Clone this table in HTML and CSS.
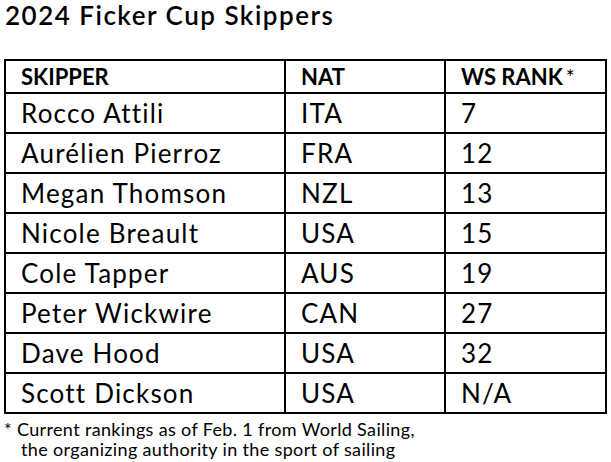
FILE: index.html
```html
<!DOCTYPE html>
<html>
<head>
<meta charset="utf-8">
<link rel="stylesheet" href="styles.css">
</head>
<body>
<div class="page">
  <h1 class="title">2024 Ficker Cup Skippers</h1>
  <table class="tbl">
    <thead>
      <tr><th class="c1">SKIPPER</th><th class="c2">NAT</th><th class="c3">WS RANK<span class="star">*</span></th></tr>
    </thead>
    <tbody>
      <tr><td>Rocco Attili</td><td>ITA</td><td>7</td></tr>
      <tr><td>Aurélien Pierroz</td><td>FRA</td><td>12</td></tr>
      <tr><td>Megan Thomson</td><td>NZL</td><td>13</td></tr>
      <tr><td>Nicole Breault</td><td>USA</td><td>15</td></tr>
      <tr><td>Cole Tapper</td><td>AUS</td><td>19</td></tr>
      <tr><td>Peter Wickwire</td><td>CAN</td><td>27</td></tr>
      <tr><td>Dave Hood</td><td>USA</td><td>32</td></tr>
      <tr><td>Scott Dickson</td><td>USA</td><td>N/A</td></tr>
    </tbody>
  </table>
  <p class="note">* Current rankings as of Feb. 1 from World Sailing,<br><span class="indent">the organizing authority in the sport of sailing</span></p>
</div>
</body>
</html>
```
FILE: styles.css
```css
html, body {
  margin: 0;
  padding: 0;
  background: #ffffff;
}
body {
  font-family: "Lato", "Liberation Sans", sans-serif;
  color: #000;
}
.page {
  padding: 0 4px 0 4px;
}
.title {
  margin: 0;
  font-size: 26px;
  font-weight: 600;
  line-height: 30px;
  letter-spacing: 1.5px;
  padding-left: 1px;
}
.tbl {
  margin-top: 29px;
  border-collapse: collapse;
  width: 603px;
  table-layout: fixed;
}
.tbl th, .tbl td {
  border: 2px solid #000;
  text-align: left;
  padding: 0 0 0 15px;
  white-space: nowrap;
}
.tbl th {
  font-size: 22px;
  font-weight: 700;
  height: 31px;
}
.tbl td {
  font-size: 26px;
  font-weight: 400;
  letter-spacing: 1.2px;
  height: 38px;
}
.c1 { width: 263px; }
.c2 { width: 143px; }
.star {
  font-size: 21px;
  line-height: 0;
  font-weight: 400;
  margin-left: 3px;
}
.note {
  margin: 5px 0 0 0;
  font-size: 18px;
  line-height: 20px;
  letter-spacing: 0.35px;
}
.indent {
  padding-left: 17px;
}
```
